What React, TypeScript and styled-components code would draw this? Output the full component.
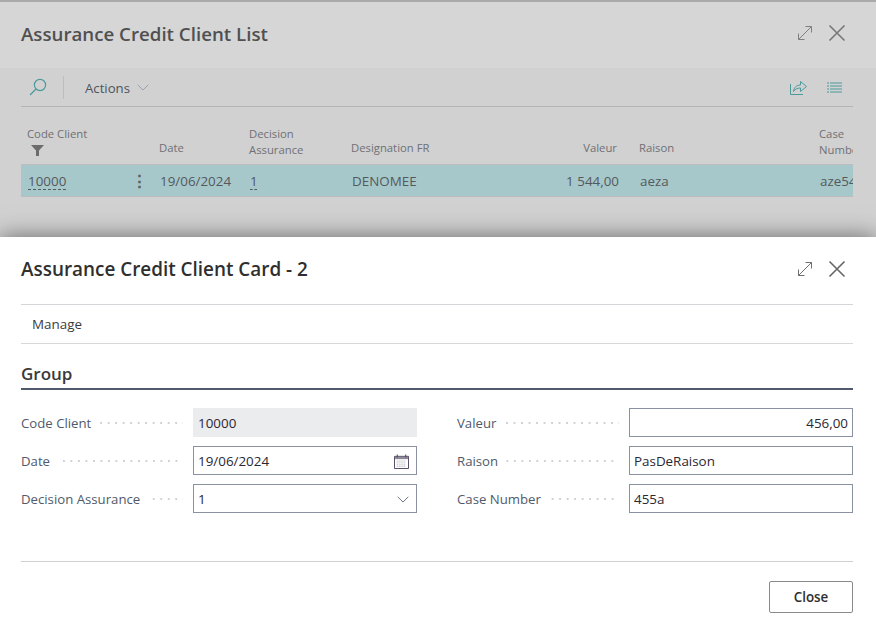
import React from "react";
import styled, { createGlobalStyle } from "styled-components";

const GlobalStyle = createGlobalStyle`
  html, body {
    margin: 0;
    padding: 0;
    background: #fff;
  }
  * {
    box-sizing: border-box;
  }
`;

interface ColumnType {
  head: string[];
  value: string;
  width: number;
  right?: boolean;
  link?: boolean;
  filter?: boolean;
  menu?: boolean;
}

const columns: ColumnType[] = [
  { head: ["Code Client"], value: "10000", width: 132, link: true, filter: true, menu: true },
  { head: ["Date"], value: "19/06/2024", width: 90 },
  { head: ["Decision", "Assurance"], value: "1", width: 102, link: true },
  { head: ["Designation FR"], value: "DENOMEE", width: 154 },
  { head: ["Valeur"], value: "1 544,00", width: 134, right: true },
  { head: ["Raison"], value: "aeza", width: 180 },
  { head: ["Case", "Number"], value: "aze54", width: 100 },
];

const leftFields = [
  { label: "Code Client", value: "10000", readOnly: true },
  { label: "Date", value: "19/06/2024", icon: "calendar" },
  { label: "Decision Assurance", value: "1", icon: "chevron" },
];

const rightFields = [
  { label: "Valeur", value: "456,00", right: true },
  { label: "Raison", value: "PasDeRaison" },
  { label: "Case Number", value: "455a" },
];

function ExpandIcon({ color }: { color: string }) {
  return (
    <svg width="16" height="16" viewBox="0 0 16 16" fill="none" stroke={color} strokeWidth="1">
      <path d="M1.5 14.5 14.5 1.5M8.5 1.5h6v6M1.5 8.5v6h6" />
    </svg>
  );
}

function CloseIcon({ color }: { color: string }) {
  return (
    <svg width="18" height="18" viewBox="0 0 18 18" fill="none" stroke={color} strokeWidth="1.6">
      <path d="M1.5 1.5 16.5 16.5M16.5 1.5 1.5 16.5" />
    </svg>
  );
}

function Chevron({ color, size }: { color: string; size: number }) {
  return (
    <svg width={size} height={size / 2 + 1} viewBox="0 0 14 8" fill="none" stroke={color} strokeWidth="1">
      <path d="M.8.8 7 7l6.2-6.2" />
    </svg>
  );
}

function Calendar() {
  return (
    <svg width="15" height="15" viewBox="0 0 16 16" fill="none">
      <path d="M.5 2.5h15v13H.5z" stroke="#4b3d5c" />
      <path d="M1 3h14v2.5H1z" fill="#8d8a96" />
      <path d="M3.5.5v3M12.5.5v3" stroke="#4b3d5c" />
      <path
        d="M3 7.5h10M3 9.5h10M3 11.5h10M3 13.2h10"
        stroke="#a9a6b2"
        strokeDasharray="1 1"
      />
    </svg>
  );
}

export default function App() {
  return (
    <Page>
      <GlobalStyle />
      <BackPanel>
        <BackHeader>
          <BackTitle>Assurance Credit Client List</BackTitle>
          <HeaderIcons>
            <ExpandIcon color="#808080" />
            <CloseIcon color="#777777" />
          </HeaderIcons>
        </BackHeader>
        <BackBody>
          <Toolbar>
            <SearchButton>
              <svg width="18" height="18" viewBox="0 0 18 18" fill="none" stroke="#4d9a9c" strokeWidth="1.2">
                <circle cx="11" cy="7" r="5.6" />
                <path d="M7 11 1 17" />
              </svg>
            </SearchButton>
            <ToolbarSeparator />
            <ActionsLabel>Actions</ActionsLabel>
            <Chevron color="#8a9aa0" size={12} />
            <ToolbarRight>
              <svg width="17" height="15" viewBox="0 0 17 15" fill="none" stroke="#4d9a9c" strokeWidth="1">
                <path d="M.5 4v10.5h12.5" />
                <path d="M3.5 11.5C4 7.5 6.5 5 10.5 5V1.5l6 5-6 5V8C7.5 8 5 9 3.5 11.5z" />
              </svg>
              <svg width="15" height="11" viewBox="0 0 15 11" fill="none" stroke="#4d9a9c" strokeWidth="1">
                <path d="M0 1h2M3 1h12M0 4h2M3 4h12M0 7h2M3 7h12M0 10h2M3 10h12" />
              </svg>
            </ToolbarRight>
          </Toolbar>
          <ListTable>
            <HeadRow>
              {columns.map((col) => (
                <HeadCell
                  key={col.head[0]}
                  $width={col.width}
                  $right={col.right}
                  $single={col.head.length === 1 && !col.filter}
                >
                  {col.head.map((line) => (
                    <HeadLine key={line}>{line}</HeadLine>
                  ))}
                  {col.filter && (
                    <FilterIcon>
                      <svg width="13" height="11" viewBox="0 0 13 11">
                        <path d="M0 0h13L8 5.5V11H5V5.5z" fill="#6c6c6c" />
                      </svg>
                    </FilterIcon>
                  )}
                </HeadCell>
              ))}
            </HeadRow>
            <DataRow>
              {columns.map((col) => (
                <DataCell key={col.head[0]} $width={col.width} $right={col.right}>
                  <CellText $link={col.link}>{col.value}</CellText>
                  {col.menu && <RowMenu>⋮</RowMenu>}
                </DataCell>
              ))}
            </DataRow>
          </ListTable>
        </BackBody>
      </BackPanel>

      <CardPanel>
        <CardHeader>
          <CardTitle>Assurance Credit Client Card - 2</CardTitle>
          <HeaderIcons>
            <ExpandIcon color="#707070" />
            <CloseIcon color="#666666" />
          </HeaderIcons>
        </CardHeader>
        <ManageBar>
          <ManageLabel>Manage</ManageLabel>
        </ManageBar>
        <GroupTitle>Group</GroupTitle>
        <FormGrid>
          {[leftFields, rightFields].map((fields, i) => (
            <FormColumn key={i}>
              {fields.map((field: any) => (
                <FieldRow key={field.label}>
                  <FieldLabel>
                    <span>{field.label}</span>
                    <Dots />
                  </FieldLabel>
                  <FieldInput $readOnly={field.readOnly} $right={field.right}>
                    <span>{field.value}</span>
                    {field.icon === "calendar" && (
                      <FieldIcon>
                        <Calendar />
                      </FieldIcon>
                    )}
                    {field.icon === "chevron" && (
                      <FieldIcon>
                        <Chevron color="#555f70" size={12} />
                      </FieldIcon>
                    )}
                  </FieldInput>
                </FieldRow>
              ))}
            </FormColumn>
          ))}
        </FormGrid>
        <CardFooter>
          <CloseButton>Close</CloseButton>
        </CardFooter>
      </CardPanel>
    </Page>
  );
}

const Page = styled.div`
  width: 876px;
  height: 637px;
  overflow: hidden;
  background: #fff;
  font-family: "Open Sans", "Noto Sans", sans-serif;
  font-size: 13px;
`;

const BackPanel = styled.section`
  height: 237px;
  background: #d1d1d1;
  border-top: 2px solid #a9a9a9;
`;

const BackHeader = styled.header`
  height: 66px;
  padding: 0 21px 4px;
  display: flex;
  align-items: center;
  justify-content: space-between;
  background: #d6d6d6;
`;

const BackTitle = styled.h1`
  margin: 0;
  font-size: 18.7px;
  font-weight: 600;
  color: #505050;
`;

const HeaderIcons = styled.div`
  display: flex;
  align-items: center;
  gap: 15px;
  padding-right: 9px;
`;

const BackBody = styled.div`
  padding: 0 23px 0 21px;
`;

const Toolbar = styled.div`
  height: 39px;
  display: flex;
  align-items: center;
  border-bottom: 1px solid #b5b5b5;
`;

const SearchButton = styled.div`
  width: 42px;
  padding-left: 8px;
  display: flex;
  align-items: center;
`;

const ToolbarSeparator = styled.div`
  width: 1px;
  height: 23px;
  background: #bdbdbd;
`;

const ActionsLabel = styled.span`
  margin: 2px 7px 0 21px;
  font-size: 13.2px;
  color: #4f535c;
`;

const ToolbarRight = styled.div`
  margin-left: auto;
  padding-right: 11px;
  display: flex;
  align-items: center;
  gap: 20px;
`;

const ListTable = styled.div`
  overflow: hidden;
`;

const HeadRow = styled.div`
  height: 57px;
  padding-bottom: 6px;
  display: flex;
  align-items: flex-end;
`;

const HeadCell = styled.div<{ $width: number; $right?: boolean; $single?: boolean }>`
  flex: 0 0 ${(p) => p.$width}px;
  padding: 0 ${(p) => (p.$right ? "16px" : "6px")} ${(p) => (p.$single ? "2px" : "0")} 6px;
  text-align: ${(p) => (p.$right ? "right" : "left")};
  color: #6f7075;
  font-size: 11.3px;
`;

const HeadLine = styled.div`
  line-height: 16px;
  white-space: nowrap;
`;

const FilterIcon = styled.div`
  height: 16px;
  padding: 3px 0 0 4px;
  line-height: 0;
`;

const DataRow = styled.div`
  height: 33px;
  display: flex;
  align-items: stretch;
  background: #a7c8cb;
  border-top: 1px solid #bcbcbc;
  border-bottom: 1px solid #bcbcbc;
`;

const DataCell = styled.div<{ $width: number; $right?: boolean }>`
  position: relative;
  flex: 0 0 ${(p) => p.$width}px;
  padding: 1px ${(p) => (p.$right ? "14px" : "6px")} 0 7px;
  text-align: ${(p) => (p.$right ? "right" : "left")};
  white-space: nowrap;
  line-height: 31px;
  font-size: 13.4px;
  color: #54595c;
`;

const CellText = styled.span<{ $link?: boolean }>`
  text-decoration: ${(p) => (p.$link ? "underline dashed 1px" : "none")};
  text-underline-offset: 3px;
`;

const RowMenu = styled.span`
  position: absolute;
  left: 110px;
  top: 0;
  font-size: 17px;
  font-weight: 700;
  color: #5a5f62;
`;

const CardPanel = styled.section`
  position: relative;
  height: 400px;
  background: #fff;
  box-shadow: 0 0 22px rgba(0, 0, 0, 0.5);
  padding: 0 23px 0 21px;
`;

const CardHeader = styled.header`
  height: 67px;
  margin-right: -23px;
  padding: 0 21px 4px 0;
  display: flex;
  align-items: center;
  justify-content: space-between;
`;

const CardTitle = styled.h2`
  margin: 0;
  font-size: 18.9px;
  font-weight: 600;
  color: #2f2f2f;
`;

const ManageBar = styled.div`
  height: 40px;
  padding-left: 11px;
  display: flex;
  align-items: center;
  border-top: 1px solid #d3d5d9;
  border-bottom: 1px solid #d8d8d8;
`;

const ManageLabel = styled.span`
  font-size: 13.4px;
  color: #3c3c3c;
`;

const GroupTitle = styled.h3`
  margin: 0;
  height: 46px;
  padding-top: 17px;
  line-height: 26px;
  font-size: 17px;
  font-weight: 600;
  color: #3a3a3a;
  border-bottom: 2px solid #505a6b;
`;

const FormGrid = styled.div`
  height: 172px;
  padding-top: 18px;
  display: grid;
  grid-template-columns: 396px 396px;
  column-gap: 40px;
  align-content: start;
  border-bottom: 1px solid #d0d0d0;
`;

const FormColumn = styled.div`
  display: flex;
  flex-direction: column;
  gap: 9px;
`;

const FieldRow = styled.div`
  height: 29px;
  display: grid;
  grid-template-columns: 172px 224px;
`;

const FieldLabel = styled.label`
  display: flex;
  align-items: center;
  gap: 8px;
  padding-top: 1px;
  font-size: 13.2px;
  color: #505a6b;
  white-space: nowrap;
`;

const Dots = styled.i`
  flex: 1;
  height: 2px;
  margin-right: 10px;
  background-image: linear-gradient(to right, #cfd1d4 2px, transparent 2px);
  background-size: 7.5px 2px;
  background-position: right center;
`;

const FieldInput = styled.div<{ $readOnly?: boolean; $right?: boolean }>`
  display: flex;
  align-items: center;
  justify-content: ${(p) => (p.$right ? "flex-end" : "space-between")};
  padding: 1px ${(p) => (p.$right ? "4px" : "5px")} 0 4px;
  font-size: 13.4px;
  color: #2b2733;
  background: ${(p) => (p.$readOnly ? "#ebecee" : "#fff")};
  border: 1px solid ${(p) => (p.$readOnly ? "#ebecee" : "#8a91a0")};
`;

const FieldIcon = styled.span`
  display: flex;
  margin-right: 2px;
`;

const CardFooter = styled.footer`
  padding-top: 19px;
  display: flex;
  justify-content: flex-end;
`;

const CloseButton = styled.button`
  width: 84px;
  height: 32px;
  padding: 0;
  background: #fff;
  border: 1px solid #8a8a8a;
  border-radius: 2px;
  font-family: inherit;
  font-size: 13.4px;
  font-weight: 600;
  color: #2f2f2f;
`;
